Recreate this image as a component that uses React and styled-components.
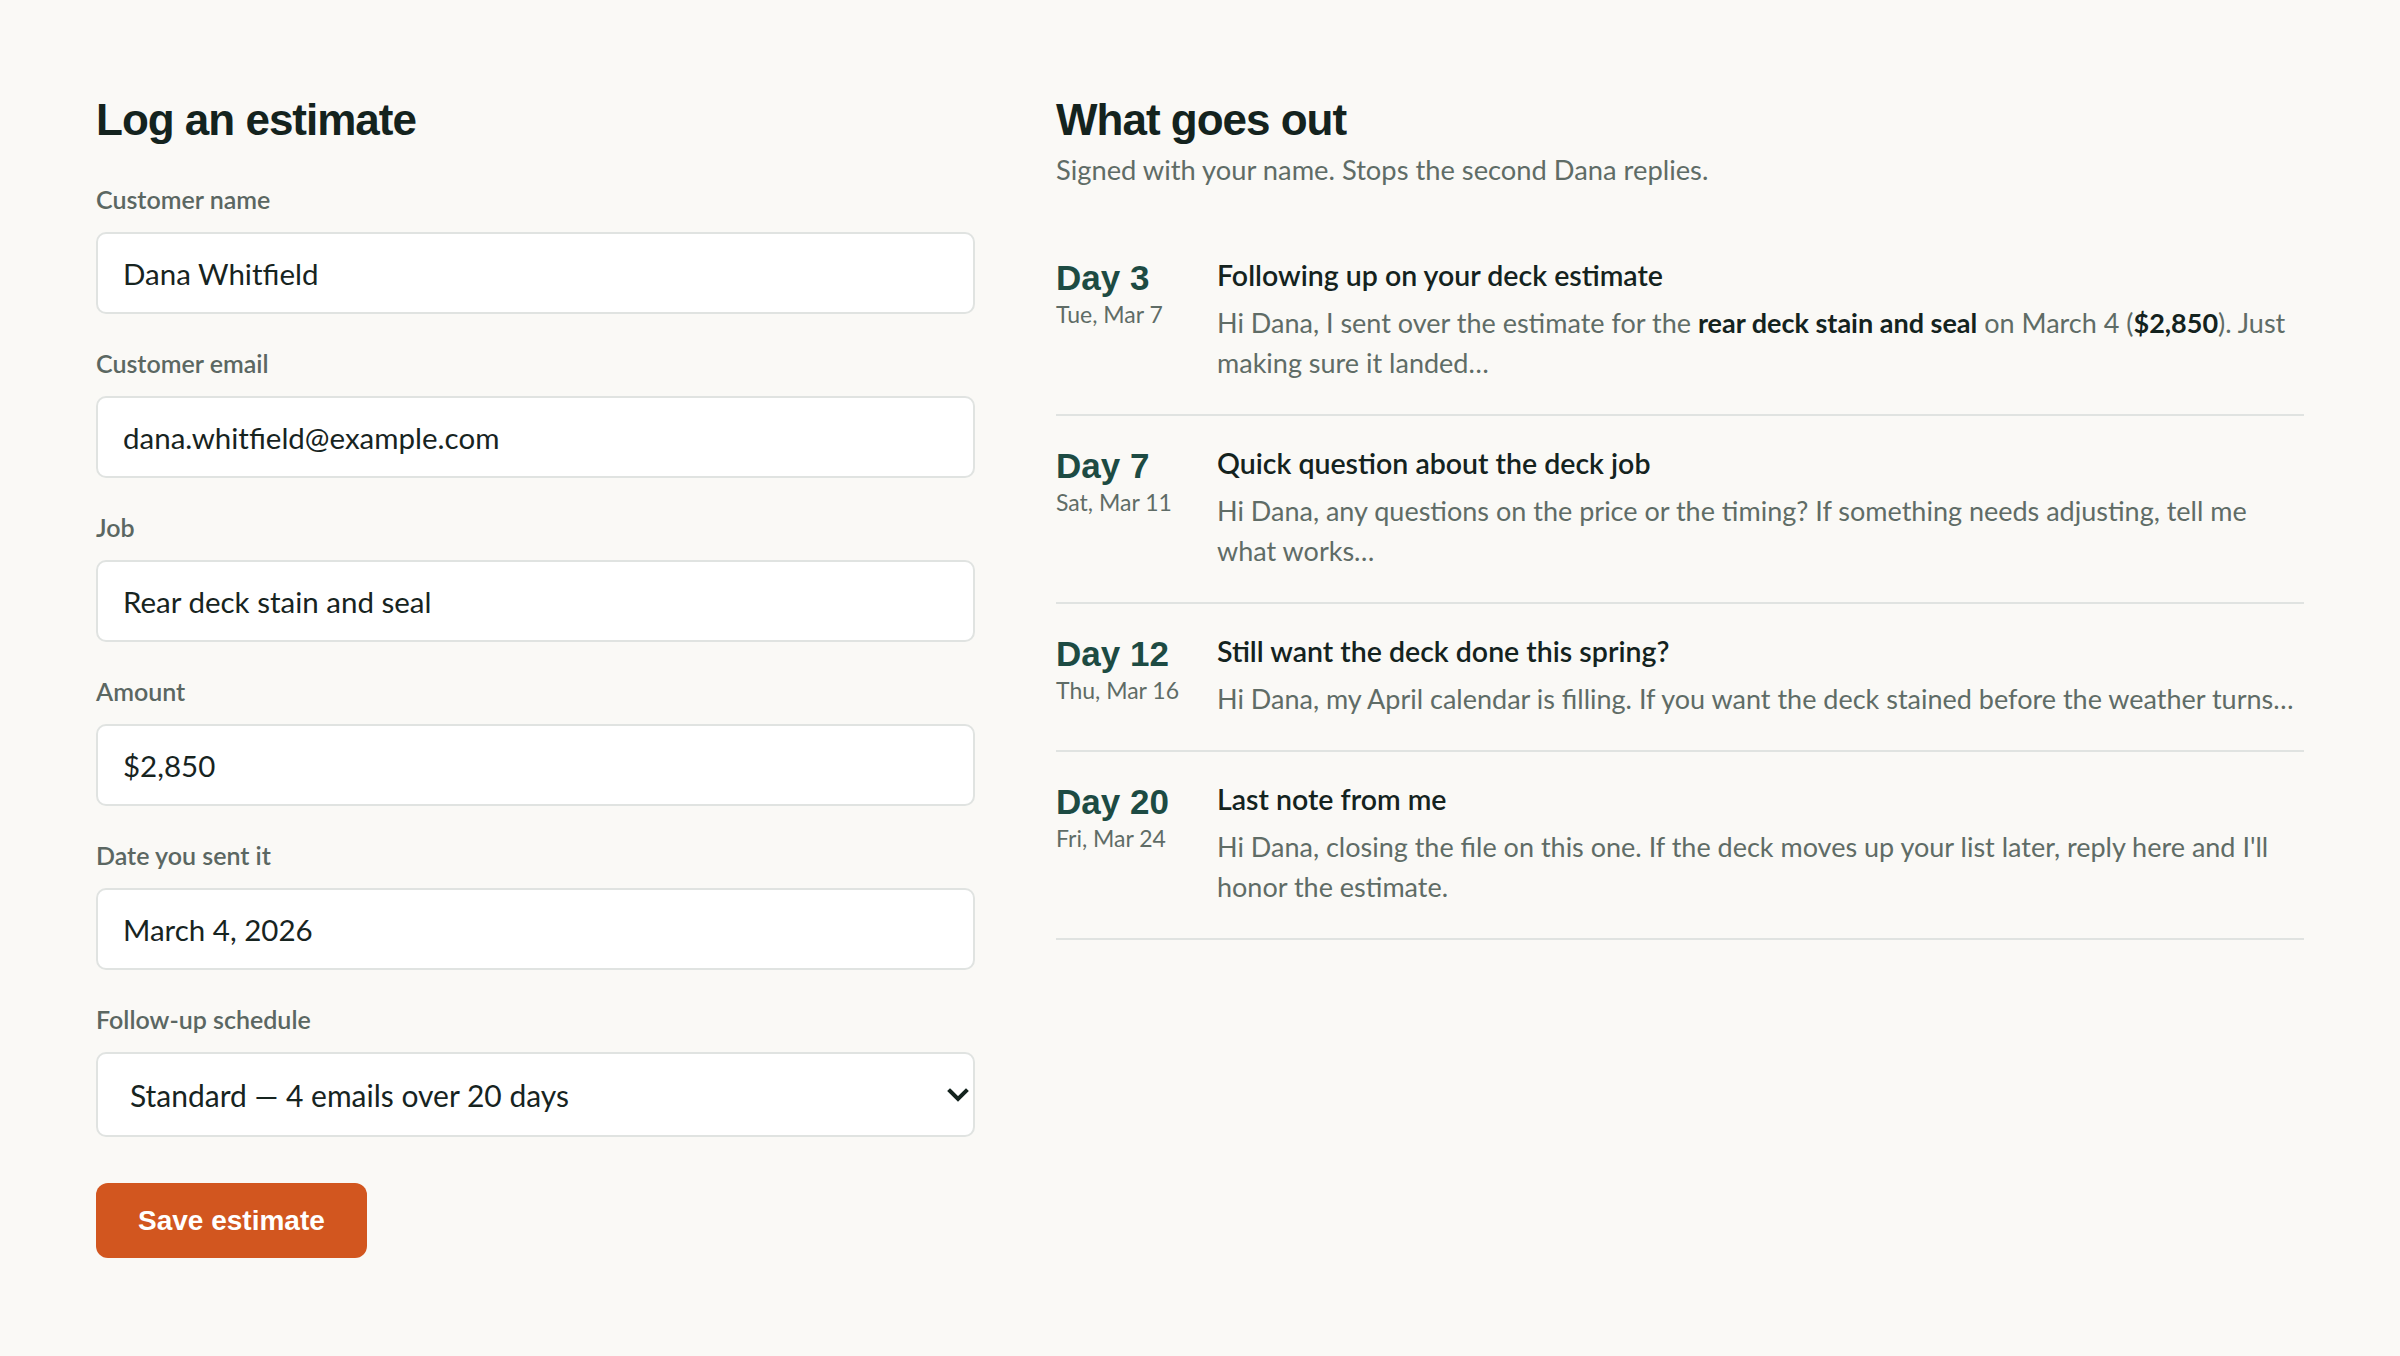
import { createGlobalStyle } from "styled-components";
import styled from "styled-components";

const GlobalStyle = createGlobalStyle`
  * { box-sizing: border-box; }
  html, body { margin: 0; padding: 0; }
  body {
    background: #faf9f6;
    color: #17241f;
    font-family: Lato, "Noto Sans", sans-serif;
  }
`

const Page = styled.div`
  min-height: 1356px;
  padding: 93px 96px 96px;
  display: grid;
  grid-template-columns: 879px 1fr;
  column-gap: 81px;
  align-items: start;
`

const Heading = styled.h1`
  margin: 0;
  font-family: "Liberation Sans", Arial, sans-serif;
  font-weight: 700;
  font-size: 44px;
  line-height: 54px;
  letter-spacing: -1px;
  color: #14231e;
`

const Form = styled.form`
  display: flex;
  flex-direction: column;
`

const Fields = styled.div`
  display: flex;
  flex-direction: column;
  gap: 34px;
  margin-top: 37px;
`

const Field = styled.label`
  display: flex;
  flex-direction: column;
  gap: 17px;
`

const LabelText = styled.span`
  font-size: 25px;
  line-height: 31px;
  font-weight: 600;
  color: #5b6762;
`

const Input = styled.input`
  height: 82px;
  width: 100%;
  padding: 0 25px;
  border: 2px solid #e0e3e1;
  border-radius: 10px;
  background: #fff;
  font-family: Lato, "Noto Sans", sans-serif;
  font-size: 29.5px;
  color: #17241f;
  outline: none;
`

const SelectWrap = styled.div`
  position: relative;
`

const Select = styled.select`
  appearance: none;
  -webkit-appearance: none;
  height: 85px;
  width: 100%;
  padding: 0 60px 0 32px;
  border: 2px solid #e0e3e1;
  border-radius: 10px;
  background: #fff;
  font-family: Lato, "Noto Sans", sans-serif;
  font-size: 30px;
  color: #17241f;
  outline: none;
`

const Chevron = styled.svg`
  position: absolute;
  right: 6px;
  top: 50%;
  transform: translateY(-50%);
  pointer-events: none;
`

const SaveButton = styled.button`
  align-self: flex-start;
  margin-top: 46px;
  height: 75px;
  padding: 0 42px;
  border: none;
  border-radius: 12px;
  background: #d2561f;
  color: #fff;
  font-family: "Liberation Sans", Arial, sans-serif;
  font-weight: 700;
  font-size: 28px;
  cursor: pointer;
`

const Preview = styled.section`
  display: flex;
  flex-direction: column;
`

const Sub = styled.p`
  margin: 4px 0 0;
  font-size: 27.3px;
  line-height: 38px;
  color: #5f6c66;
`

const List = styled.ol`
  list-style: none;
  margin: 39px 0 0;
  padding: 0;
`

const Item = styled.li`
  display: grid;
  grid-template-columns: 161px 1fr;
  padding: 29px 0 31px;
  border-bottom: 2px solid #e0e3e1;
`

const When = styled.div`
  display: flex;
  flex-direction: column;
`

const Day = styled.span`
  font-family: "Liberation Sans", Arial, sans-serif;
  font-weight: 700;
  font-size: 35px;
  line-height: 41px;
  color: #1d4b43;
`

const Date = styled.span`
  font-size: 23px;
  line-height: 32px;
  color: #5f6c66;
`

const Mail = styled.div`
  display: flex;
  flex-direction: column;
  gap: 10px;
  min-width: 0;
`

const Subject = styled.span`
  font-size: 28.5px;
  line-height: 36px;
  font-weight: 600;
  color: #14231e;
`

const Body = styled.p`
  margin: 0;
  font-size: 27px;
  line-height: 40px;
  color: #5f6c66;
  ${p => p.$single && `
    white-space: nowrap;
    overflow: hidden;
    text-overflow: ellipsis;
  `}
  b { font-weight: 700; color: #14231e; }
`

const emails = [
  {
    day: "Day 3",
    date: "Tue, Mar 7",
    subject: "Following up on your deck estimate",
    body: (
      <>Hi Dana, I sent over the estimate for the <b>rear deck stain and seal</b> on March 4 (<b>$2,850</b>). Just making sure it landed…</>
    ),
  },
  {
    day: "Day 7",
    date: "Sat, Mar 11",
    subject: "Quick question about the deck job",
    body: "Hi Dana, any questions on the price or the timing? If something needs adjusting, tell me what works…",
  },
  {
    day: "Day 12",
    date: "Thu, Mar 16",
    subject: "Still want the deck done this spring?",
    body: "Hi Dana, my April calendar is filling. If you want the deck stained before the weather turns…",
    single: true,
  },
  {
    day: "Day 20",
    date: "Fri, Mar 24",
    subject: "Last note from me",
    body: "Hi Dana, closing the file on this one. If the deck moves up your list later, reply here and I'll honor the estimate.",
  },
]

const fields = [
  { label: "Customer name", value: "Dana Whitfield" },
  { label: "Customer email", value: "dana.whitfield@example.com" },
  { label: "Job", value: "Rear deck stain and seal" },
  { label: "Amount", value: "$2,850" },
  { label: "Date you sent it", value: "March 4, 2026" },
]

function App() {
  return (
    <>
      <GlobalStyle />
      <Page>
        <Form onSubmit={e => e.preventDefault()}>
          <Heading>Log an estimate</Heading>
          <Fields>
            {fields.map(f => (
              <Field key={f.label}>
                <LabelText>{f.label}</LabelText>
                <Input defaultValue={f.value} />
              </Field>
            ))}
            <Field>
              <LabelText>Follow-up schedule</LabelText>
              <SelectWrap>
                <Select defaultValue="standard">
                  <option value="standard">Standard — 4 emails over 20 days</option>
                  <option value="short">Short — 2 emails over 7 days</option>
                </Select>
                <Chevron width="22" height="14" viewBox="0 0 22 14" fill="none">
                  <path d="M3 3l8 8 8-8" stroke="#14231e" strokeWidth="4" strokeLinecap="square" strokeLinejoin="miter" />
                </Chevron>
              </SelectWrap>
            </Field>
          </Fields>
          <SaveButton type="submit">Save estimate</SaveButton>
        </Form>

        <Preview>
          <Heading>What goes out</Heading>
          <Sub>Signed with your name. Stops the second Dana replies.</Sub>
          <List>
            {emails.map(m => (
              <Item key={m.day}>
                <When>
                  <Day>{m.day}</Day>
                  <Date>{m.date}</Date>
                </When>
                <Mail>
                  <Subject>{m.subject}</Subject>
                  <Body $single={m.single}>{m.body}</Body>
                </Mail>
              </Item>
            ))}
          </List>
        </Preview>
      </Page>
    </>
  )
}

export default App
